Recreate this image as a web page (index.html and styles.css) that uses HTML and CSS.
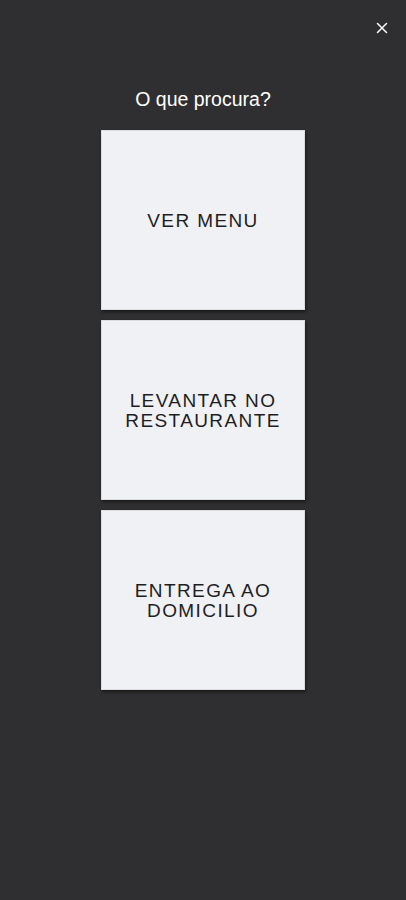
FILE: index.html
```html
<!DOCTYPE html>
<html lang="pt">
<head>
    <meta charset="UTF-8">
    <title>O que procura?</title>
    <link rel="stylesheet" href="styles.css">
</head>
<body>
<div class="screen">
    <div class="top-bar">
        <button class="close-btn" aria-label="Fechar">
            <svg width="12" height="12" viewBox="0 0 12 12">
                <path d="M1.5 1.5 L10.5 10.5 M10.5 1.5 L1.5 10.5" stroke="#fff" stroke-width="1.5" stroke-linecap="round"/>
            </svg>
        </button>
    </div>
    <h1 class="title">O que procura?</h1>
    <div class="options">
        <a href="#" class="option">VER MENU</a>
        <a href="#" class="option">LEVANTAR NO<br>RESTAURANTE</a>
        <a href="#" class="option">ENTREGA AO<br>DOMICILIO</a>
    </div>
</div>
</body>
</html>
```

FILE: styles.css
```css
body, html {
    margin: 0;
    height: 100%;
    background-color: #2f2f31;
    font-family: 'Liberation Sans', Arial, sans-serif;
}

.screen {
    display: flex;
    flex-direction: column;
    align-items: center;
}

.top-bar {
    align-self: stretch;
    display: flex;
    justify-content: flex-end;
    padding: 22px 18px 0 0;
}

.close-btn {
    background: none;
    border: none;
    padding: 0;
    width: 12px;
    height: 12px;
    cursor: pointer;
    display: flex;
}

.title {
    margin: 54px 0 0;
    color: #fff;
    font-size: 19.5px;
    font-weight: normal;
    line-height: 22px;
}

.options {
    margin-top: 20px;
    display: flex;
    flex-direction: column;
    gap: 10px;
}

.option {
    width: 204px;
    height: 180px;
    box-sizing: border-box;
    padding-top: 2px;
    background: #f0f1f5;
    border: 1px solid #dcdde0;
    box-shadow: 1px 2px 3px rgba(0, 0, 0, 0.5);
    display: flex;
    align-items: center;
    justify-content: center;
    text-align: center;
    text-decoration: none;
    color: #1e1e1e;
    font-size: 19px;
    letter-spacing: 1.4px;
    line-height: 20px;
}
```
